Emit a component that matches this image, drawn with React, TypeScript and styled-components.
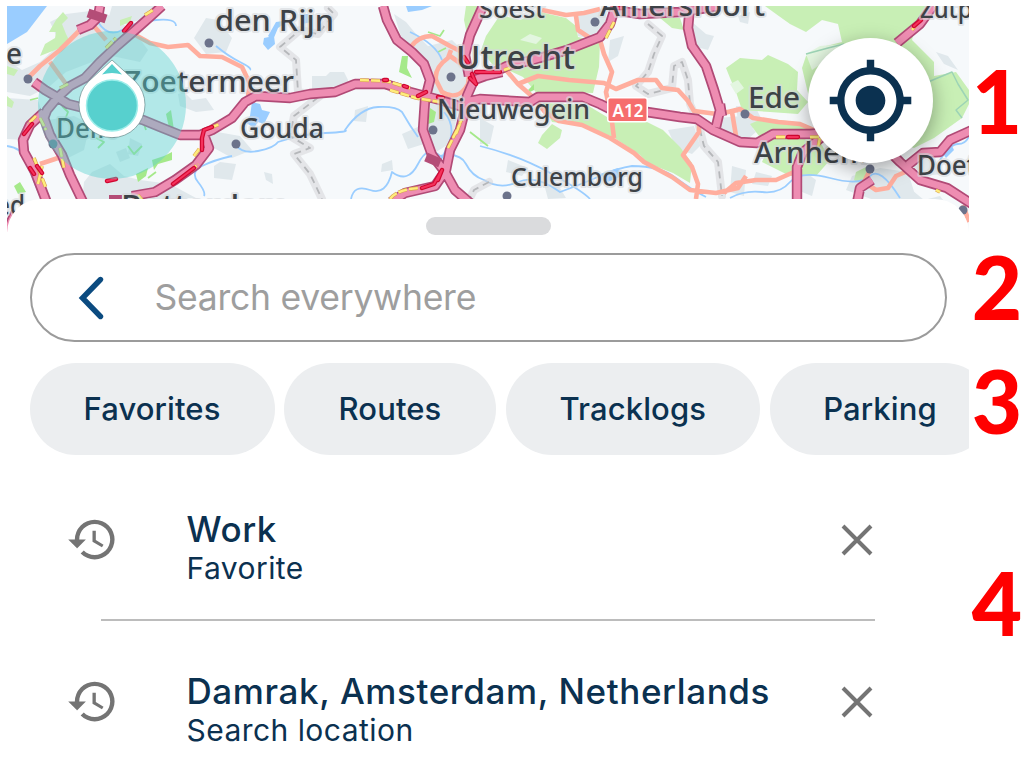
import { createGlobalStyle, styled } from "styled-components";
import { MdGpsFixed, MdHistory } from "react-icons/md";

const categories = [
  { title: "Favorites", width: 245 },
  { title: "Routes", width: 212 },
  { title: "Tracklogs", width: 254.5 },
  { title: "Parking", width: 221 },
];

const history = [
  { title: "Work", subtitle: "Favorite" },
  { title: "Damrak, Amsterdam, Netherlands", subtitle: "Search location" },
];

const urbanAreas = [
  "M50 22L66 14 98 10 118 20 136 34 148 50 140 62 112 56 92 62 66 72 50 86 30 96 7 92 7 60 22 70 40 62 60 44Z",
  "M200 28L206 18 218 20 232 38 226 52 206 54 194 38Z",
  "M112 6L160 6 150 16 128 24 108 20Z",
  "M7 98L38 100 44 118 30 128 24 140 7 139Z",
  "M48 120L74 116 90 124 84 150 64 160 50 142Z",
  "M84 182L92 172 110 164 124 176 140 180 170 184 196 198 82 202Z",
  "M116 152L126 148 130 158 120 162Z",
  "M130 138L142 144 138 156 128 154Z",
  "M100 30L112 26 116 40 104 46Z",
  "M178 94L184 92 192 100 206 98 214 110 196 112 180 106Z",
  "M206 130L240 136 252 150 232 158 214 148Z",
  "M214 166L220 162 236 164 232 180 214 178Z",
  "M312 76L326 76 330 72 344 72 348 80 346 92 336 96 312 96Z",
  "M394 14L406 22 416 34 428 46 452 40 470 58 472 90 458 106 434 98 424 66 404 46Z",
  "M402 134L420 126 424 144 408 149Z",
  "M428 100L458 110 452 142 436 152 428 134Z",
  "M355 110L368 106 366 122 354 121Z",
  "M382 164L392 160 393 170 381 172Z",
  "M264 172L272 174 273 184 266 180Z",
  "M576 14L604 8 610 28 596 40 578 36Z",
  "M610 40L624 36 618 56 608 62Z",
  "M668 130L694 126 700 146 692 154 676 148Z",
  "M692 22L706 34 714 36 708 50 692 46Z",
  "M480 118L494 126 490 144 480 144Z",
  "M508 160L528 168 522 176 506 172Z",
  "M718 118L742 116 756 132 740 146 724 138Z",
  "M736 106L756 108 762 120 746 134 738 122Z",
  "M732 166L746 170 744 196 730 192Z",
  "M756 172L772 176 768 186 752 184Z",
  "M800 168L816 180 812 196 802 192Z",
  "M852 176L880 168 908 172 916 198 874 200 846 190Z",
  "M896 196L912 190 924 200 940 196 946 204 896 204Z",
  "M908 162L934 158 942 174 924 176Z",
  "M936 52L948 56 958 70 944 64Z",
  "M738 16L750 12 748 24 740 22Z",
  "M544 184L560 188 566 198 548 199Z",
];

const woods = [
  "M56 20L63 12 68 18 62 24 66 34 70 42 60 48 50 52 40 56 45 44 55 38 56 32 49 32Z",
  "M7 66L18 70 14 76 7 74Z",
  "M7 96L14 102 12 108 7 106Z",
  "M120 20L132 16 130 22 120 26Z",
  "M500 15L520 20 540 12 566 18 576 26 578 37 600 42 599 67 593 93 570 92 540 97 523 77 508 70 492 64 481 50 486 36Z",
  "M543 103L587 105 607 117 647 122 663 130 680 147 692 163 690 183 673 173 647 163 640 155 613 137 580 125 552 122Z",
  "M552 124L562 130 560 138 547 149 538 143 542 135Z",
  "M660 18L680 18 684 30 672 28Z",
  "M765 6L930 6 916 24 912 40 934 62 934 76 956 72 969 90 969 104 962 118 934 138 914 148 860 130 812 110 802 68 806 56 818 48 842 42 838 24 822 20 806 32 790 24 776 14Z",
  "M726 68L740 58 762 60 768 55 788 64 798 72 797 90 808 102 798 114 770 112 742 110 736 92 730 78Z",
  "M750 124L764 118 796 122 816 134 830 160 816 176 790 176 762 162 768 148Z",
  "M856 172L868 166 864 186 854 180Z",
  "M466 6L482 6 468 40 464 20Z",
];

const meadows = [
  "M402 56L408 56 407 68 412 78 399 72Z",
  "M430 108L436 112 434 122 428 124Z",
  "M152 160L164 156 172 152 172 160 158 164 154 170Z",
  "M166 114L171 110 174 130 170 132Z",
  "M14 186L20 182 26 192 18 194Z",
  "M136 174L148 168 146 176 138 182Z",
  "M528 90L534 84 534 90 530 92Z",
];

const lakes = [
  "M7 6L47 6 27 32 7 44Z",
  "M252 102L260 104 262 110 270 112 264 124 258 122 254 128 245 122 250 116Z",
  "M264 38L274 36 275 44 268 50 263 44Z",
  "M268 36L276 22 290 20 278 28 273 40Z",
  "M300 14L308 14 312 22 302 24Z",
  "M406 6L432 6 422 10 408 12Z",
  "M940 150L950 142 954 150 946 158Z",
  "M600 174L618 168 622 176 608 182Z",
];

const rivers = [
  "M98 22Q108 38 122 30T156 20T176 26",
  "M216 46Q228 56 240 62T250 70",
  "M7 146Q22 148 26 160T40 196",
  "M236 145Q242 154 258 151T278 142Q300 134 325 133T345 130Q360 108 378 107T402 112Q410 126 418 137",
  "M232 156Q214 160 202 166T198 182T204 196",
  "M351 199Q354 184 370 190T392 172Q408 184 418 164T440 156Q460 152 466 164T484 180Q500 190 518 182T560 192Q582 184 600 176T632 166Q660 166 676 178T706 197",
  "M480 146Q520 156 552 174T590 199",
  "M730 198Q744 190 762 192T790 182T830 178T870 176T900 198",
  "M410 32Q436 44 442 60",
  "M444 112Q458 128 446 150T442 160",
  "M940 160Q950 144 958 144T969 136",
];

const borders = [
  "M328 8L334 14 318 34 300 30 280 47 296 60 298 92 320 96 294 116 290 136 310 148 294 154 310 174 322 199",
  "M648 24L662 36 654 54 648 72 636 86 648 94 672 88 674 66 682 62 688 80 690 104 698 122 704 146 718 162 722 196",
  "M489 182L474 190 470 198",
];

const minorRoads = [
  "M80 30L60 50 40 66 28 78",
  "M92 24L106 40M50 62L66 84",
  "M130 32L150 43 168 47 188 45 200 56 222 57 242 67 250 84 248 96",
  "M40 164L58 158",
  "M410 48Q418 36 432 36L450 46 466 54M451 50L448 58Q434 68 436 80L442 92Q458 102 468 84L470 70 450 56",
  "M542 10L566 15 584 13 600 9M576 16L578 30 590 38",
  "M600 40L604 54 612 72 606 92 612 122 614 138",
  "M506 70L518 84 534 98 545 112 559 121 582 125 610 138 634 153 644 162 672 177 690 190 716 193 738 188 746 176",
  "M518 84L538 76 569 80 604 83 616 89 638 80 656 80 662 88 678 90 688 101 694 111 717 114 738 110",
  "M699 120L699 132 683 155 692 167 698 184 696 199",
  "M720 114L740 109 753 118 778 122 800 124 814 130",
  "M732 112L736 136",
  "M724 193L736 183 756 180 776 180 794 172",
  "M870 170L864 182 876 190 888 188 896 176 910 170",
  "M963 205L969 222M24 205L16 218",
];

const motorways = [
  "M100 6L98 17 90 25 78 30",
  "M162 6L150 17 133 32 118 45 100 62 85 78 70 86 57 98 47 110 44 118 50 135 62 155 70 175 83 202",
  "M34 82L45 90 57 97 68 104 80 107 112 113 143 120 160 127 180 135 200 135 212 130 232 118 245 102 256 96 290 98 310 94 335 92 355 84 385 84 410 92 440 100 466 108",
  "M44 112L30 125 23 140 24 152 35 172 47 203",
  "M204 135L209 148 196 165 175 180 155 192 132 196",
  "M383 6L387 20 397 40 412 52 424 64 430 80 425 100 423 130 432 155 445 172 455 190 470 203",
  "M483 6L470 35 465 55 469 76",
  "M502 72L485 76 474 80 467 96 465 110 460 130 450 150 446 170 435 186 405 193 391 202",
  "M488 75L507 66 533 60 567 50 600 37 610 24 615 8",
  "M466 108L470 101 480 99 530 102 538 97 583 97 600 104 614 111 647 112 680 117 697 119 713 130 740 142 757 143 773 134 810 134 832 132",
  "M690 6L688 28 692 46 706 66 714 90 720 110 716 127",
  "M933 6L920 24 897 43",
  "M826 134L803 152 797 167 797 202",
  "M872 180L860 188 857 203",
  "M886 148L900 162 920 180 947 188 972 204",
  "M908 165L923 153 940 152 950 140 972 130",
  "M614 10L640 14 680 12 720 6",
  "M720 104L722 116M7 232L12 220 16 212",
];

const slowTraffic = [
  "M145 15L153 10M36 116L28 124M34 158L46 188M60 148L64 168M38 184L42 166",
  "M194 156L200 148M210 128L220 124M138 195L142 200M190 172L198 164",
  "M106 48L116 38M60 88L68 84M40 118L46 130",
  "M360 80L386 81 410 88M390 90L416 98 440 102",
  "M390 199Q398 188 424 188M448 148L460 124M456 134L462 118",
  "M606 38L614 22M504 70L510 68M776 137L800 137M810 137L820 137 818 148",
  "M912 30L920 20M936 190L940 192",
];

const jams = [
  "M124 31L131 23M32 124L24 134M30 168L34 174M37 166L42 173",
  "M202 150L202 138 204 130 212 127M173 184L194 168M107 181L116 179",
  "M384 80L387 80M404 86L407 87M418 96L426 92",
  "M464 57L468 63M472 74L476 84 470 78M476 72L500 72M438 97L443 98",
  "M422 188L434 184 442 170 438 180",
  "M788 137L798 137M914 26L921 20",
  "M612 8L622 8",
];

const towns = [
  [209, 43], [28, 79], [53, 144], [236, 144], [451, 77], [433, 130],
  [595, 22], [507, 196], [745, 114], [870, 169], [963, 210],
];

const cities = [
  { name: "den Rijn", x: 215, y: 30.5, size: 28, width: 119 },
  { name: "Zoetermeer", x: 124, y: 92, size: 29, width: 170 },
  { name: "Gouda", x: 240, y: 138, size: 27, width: 84 },
  { name: "Delft", x: 56, y: 138, size: 27, width: 60 },
  { name: "Utrecht", x: 456, y: 69, size: 32, width: 119 },
  { name: "Nieuwegein", x: 437, y: 119, size: 27, width: 153 },
  { name: "Culemborg", x: 511, y: 185.5, size: 25.5, width: 132 },
  { name: "Soest", x: 479, y: 18, size: 25, width: 66 },
  { name: "Amersfoort", x: 600, y: 15.5, size: 28, width: 165 },
  { name: "Ede", x: 748, y: 108, size: 29, width: 52 },
  { name: "Arnhem", x: 754, y: 163, size: 29, width: 114 },
  { name: "Doetinchem", x: 917, y: 175, size: 26.5, width: 151 },
  { name: "Zutphen", x: 920, y: 18, size: 25, width: 96 },
  { name: "Rotterdam", x: 121, y: 217, size: 31, width: 168 },
  { name: "e", x: 6, y: 64, size: 28, width: 16 },
  { name: "ed", x: -4, y: 215, size: 27, width: 29 },
];

function RoadMap() {
  return (
    <MapDrawing viewBox="7 6 962 226">
      <rect x="7" y="6" width="962" height="226" fill="#f6f9fb" />
      <path d={urbanAreas.join("")} fill="#e0e8ec" />
      <path d={woods.join("")} fill="#c8efb5" />
      <path
        d="M806 54L820 46 843 44 842 50 812 70ZM730 84L738 80 744 88 736 94ZM520 40L530 34 542 38 536 44Z"
        fill="#e3f6e0"
      />
      <path d={meadows.join("")} fill="#a5e98a" />
      <path d={lakes.join("")} fill="#9acdff" />
      <g fill="none" strokeLinejoin="round">
        <path
          d="M62 106L68 112 64 122M96 138L104 142 98 148M142 118L146 130M148 178L156 172M30 100L38 98M428 32L440 36 444 30M438 52L446 48M470 132L488 146M128 146L134 154 142 146"
          stroke="#a5e98a"
          strokeWidth="1.8"
        />
        <path d={rivers.join("")} stroke="#9acdff" strokeWidth="1.8" />
        <path
          d={borders.join("")}
          stroke="#d5d6d8"
          strokeOpacity="0.55"
          strokeWidth="8"
          strokeLinecap="round"
        />
        <path
          d={borders.join("")}
          stroke="#b5b7ba"
          strokeWidth="1.8"
          strokeDasharray="7 5"
        />
        <path
          d="M806 54L828 48 844 44M928 82L952 72 958 84 968 100 956 110 962 118"
          stroke="#9dd4b6"
          strokeWidth="1.5"
        />
        <path d={minorRoads.join("")} stroke="#ffae9e" strokeWidth="4.6" />
        <path d={motorways.join("")} stroke="#b14a76" strokeWidth="10.4" />
        <path d={motorways.join("")} stroke="#ee8db2" strokeWidth="7" />
        <path
          d="M88 13L106 19M426 157L440 163"
          stroke="#b44d77"
          strokeWidth="9"
        />
        <path d="M109 198H122" stroke="#b44d77" strokeWidth="6" />
        <path
          d={slowTraffic.join("")}
          stroke="#d7a04f"
          strokeWidth="3.6"
          strokeDasharray="9 2"
        />
        <path
          d={slowTraffic.join("")}
          stroke="#ffec7c"
          strokeWidth="2.4"
          strokeDasharray="9 2"
        />
        <g strokeLinecap="round">
          <path d={jams.join("")} stroke="#cf0730" strokeWidth="4.4" />
          <path d={jams.join("")} stroke="#f5315c" strokeWidth="2" />
        </g>
      </g>
      {towns.map(([x, y]) => (
        <circle key={`town_${x}`} cx={x} cy={y} r="4.5" fill="#6c738b" />
      ))}
      {cities.map((city) => (
        <CityName
          key={city.name}
          x={city.x}
          y={city.y}
          fontSize={city.size}
          textLength={city.width}
          lengthAdjust="spacingAndGlyphs"
        >
          {city.name}
        </CityName>
      ))}
      <rect x="607" y="97" width="41" height="25.5" rx="3" fill="#fff" />
      <rect x="608.5" y="98.5" width="38" height="22.5" rx="1.5" fill="#f66d6d" />
      <RoadNumber
        x="612.5"
        y="116.5"
        textLength="31"
        lengthAdjust="spacingAndGlyphs"
      >
        A12
      </RoadNumber>
      <circle cx="112" cy="105" r="74" fill="#57d0ce" fillOpacity="0.43" />
      <path
        d="M112 60L135.5 81.5A33 33 0 1 1 88.5 81.5Z"
        fill="#fff"
        stroke="#55787b"
        strokeWidth="0.6"
      />
      <path d="M112 64L122 74.5Q112 71.500 102 74.5Z" fill="#57d0ce" />
      <circle
        cx="112"
        cy="105.5"
        r="25.5"
        fill="#57d0ce"
        stroke="#9deeea"
        strokeWidth="1.5"
      />
    </MapDrawing>
  );
}

function HistoryItem({ title, subtitle }: { title: string; subtitle: string }) {
  return (
    <Row>
      <MdHistory size={53} color="#747474" />
      <RowText>
        <RowTitle>{title}</RowTitle>
        <RowSubtitle>{subtitle}</RowSubtitle>
      </RowText>
      <RemoveButton aria-label="Remove">
        <svg width="32" height="32" viewBox="0 0 32 32">
          <path d="M2 2L30 30M30 2L2 30" stroke="#747474" strokeWidth="4" />
        </svg>
      </RemoveButton>
    </Row>
  );
}

function App() {
  return (
    <>
      <GlobalStyle />
      <Page>
        <Screen>
          <MapArea>
            <RoadMap />
            <LocateButton aria-label="My location">
              <MdGpsFixed size={89} />
            </LocateButton>
          </MapArea>
          <Sheet>
            <Handle />
            <SearchBar>
              <svg width="28" height="46" viewBox="0 0 28 46">
                <path
                  d="M22.5 4.5L4.5 23 22.5 41.5"
                  fill="none"
                  stroke="#0b4b80"
                  strokeWidth="5.4"
                  strokeLinecap="round"
                />
              </svg>
              <Placeholder>Search everywhere</Placeholder>
            </SearchBar>
            <Chips>
              {categories.map((item) => (
                <Chip key={item.title} $width={item.width}>
                  {item.title}
                </Chip>
              ))}
            </Chips>
            <HistoryItem {...history[0]} />
            <Separator />
            <HistoryItem {...history[1]} />
          </Sheet>
        </Screen>
        <Callouts>
          <Callout $height={186}>1</Callout>
          <Callout $height={114}>2</Callout>
          <Callout $height={202}>3</Callout>
          <Callout $height={88}>4</Callout>
        </Callouts>
      </Page>
    </>
  );
}

export default App;

const GlobalStyle = createGlobalStyle`
  * {
    box-sizing: border-box;
  }
  body {
    margin: 0;
    background: #fff;
    font-family: Inter, "Liberation Sans", sans-serif;
  }
`;

const Page = styled.main`
  display: flex;
  width: 1034px;
  height: 770px;
  overflow: hidden;
`;

const Screen = styled.div`
  width: 962px;
  margin: 6px 0 0 7px;
  overflow: hidden;
`;

const MapArea = styled.section`
  position: relative;
  height: 226px;
`;

const MapDrawing = styled.svg`
  display: block;
  width: 962px;
  height: 226px;
`;

const CityName = styled.text`
  font-family: "Noto Sans", sans-serif;
  font-weight: 500;
  fill: #3d4247;
  stroke: rgba(215, 218, 221, 0.65);
  stroke-width: 4px;
  stroke-linejoin: round;
  paint-order: stroke;
`;

const RoadNumber = styled.text`
  font-family: "Noto Sans", sans-serif;
  font-size: 17px;
  font-weight: 600;
  fill: #fff;
`;

const LocateButton = styled.button`
  position: absolute;
  top: 32px;
  left: 801px;
  display: flex;
  align-items: center;
  justify-content: center;
  width: 125px;
  height: 125px;
  padding: 0;
  border: 0;
  border-radius: 50%;
  background: #fff;
  color: #0b3150;
  box-shadow: 0 6px 20px rgba(0, 0, 0, 0.35);
`;

const Sheet = styled.section`
  position: relative;
  display: flex;
  flex-direction: column;
  height: 571px;
  margin-top: -33px;
  padding: 18px 0 0 22.5px;
  border-radius: 34px 34px 0 0;
  background: #fff;
`;

const Handle = styled.div`
  flex-shrink: 0;
  width: 125px;
  height: 18px;
  margin-left: 396px;
  border-radius: 9px;
  background: #dadbdd;
`;

const SearchBar = styled.div`
  display: flex;
  flex-shrink: 0;
  align-items: center;
  gap: 49px;
  width: 917px;
  height: 89px;
  margin-top: 18px;
  padding-left: 46px;
  border: 2px solid #9b9b9b;
  border-radius: 45px;
`;

const Placeholder = styled.span`
  font-size: 35.5px;
  letter-spacing: -0.25px;
  color: #9e9e9e;
`;

const Chips = styled.nav`
  display: flex;
  flex-shrink: 0;
  gap: 9.5px;
  margin-top: 21px;
`;

const Chip = styled.button<{ $width: number }>`
  flex: 0 0 ${({ $width }) => $width}px;
  height: 92px;
  padding: 0 0 2px;
  border: 0;
  border-radius: 46px;
  background: #eceef0;
  color: #0b3150;
  font-family: inherit;
  font-size: 31px;
  font-weight: 500;
  letter-spacing: 0.1px;
`;

const Row = styled.article`
  display: flex;
  flex-shrink: 0;
  height: 102px;
  margin-top: 58px;
  padding-left: 36px;
`;

const RowText = styled.div`
  display: flex;
  flex-direction: column;
  width: 654px;
  margin-top: -2px;
  padding-left: 68px;
  color: #0b3150;
`;

const RowTitle = styled.span`
  font-size: 35px;
  font-weight: 500;
  line-height: 36px;
  letter-spacing: 0.6px;
`;

const RowSubtitle = styled.span`
  font-size: 30px;
  line-height: 43px;
  letter-spacing: 0.45px;
`;

const RemoveButton = styled.button`
  width: 32px;
  height: 32px;
  margin: 11px 0 0 68px;
  padding: 0;
  border: 0;
  background: none;
`;

const Separator = styled.hr`
  flex-shrink: 0;
  width: 774px;
  height: 2px;
  margin: 4px 0 -4px 71.5px;
  border: 0;
  background: #bcbcbc;
`;

const Callouts = styled.aside`
  width: 56px;
  padding-top: 57px;
`;

const Callout = styled.div<{ $height: number }>`
  height: ${({ $height }) => $height}px;
  text-align: center;
  font-family: Lato, sans-serif;
  font-size: 87px;
  font-weight: 900;
  line-height: 88px;
  color: #f00;
`;
